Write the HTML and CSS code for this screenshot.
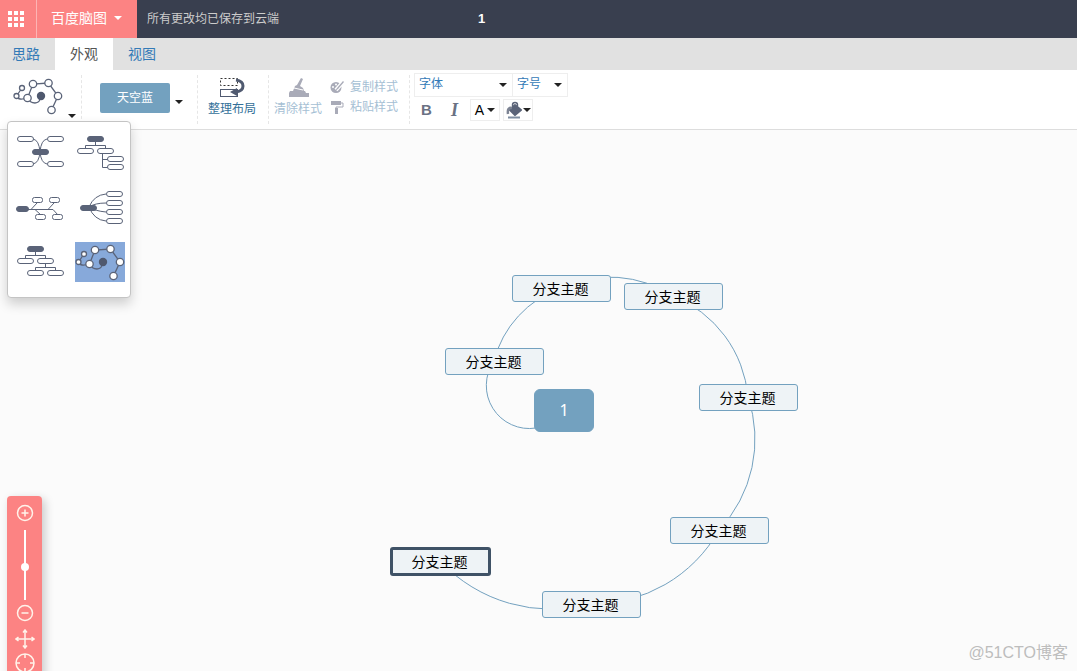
FILE: index.html
```html
<!DOCTYPE html>
<html lang="zh-CN">
<head>
<meta charset="utf-8">
<title>百度脑图</title>
<link rel="stylesheet" href="styles.css">
</head>
<body>
<svg class="defs" aria-hidden="true">
  <symbol id="spiral" viewBox="0 0 50 40">
    <path d="M3.500 20L9 12M3.500 20Q5 25 14.500 22L20 8L35.500 7L45 20L38.500 34M14.500 22Q17 27 22 27Q27 27 28 20" fill="none" stroke="#5a6378" stroke-width="1.300"/>
    <g class="dots" stroke="#5a6378" stroke-width="1.300">
      <circle cx="3.500" cy="20" r="2.500"/><circle cx="9" cy="12" r="2.500"/>
      <circle cx="14.500" cy="22" r="3.700"/><circle cx="20" cy="8" r="3.700"/><circle cx="35.500" cy="7" r="3.700"/><circle cx="45" cy="20" r="3.700"/><circle cx="38.500" cy="34" r="3.700"/>
    </g>
    <circle cx="28" cy="20" r="4.200" fill="#4f586e"/>
  </symbol>
</svg>

<header class="topbar">
  <button class="grid-button" aria-label="应用列表">
    <svg width="16" height="16" viewBox="0 0 16 16" fill="#fff"><path d="M0 0h4v4H0zM6 0h4v4H6zM12 0h4v4h-4zM0 6h4v4H0zM6 6h4v4H6zM12 6h4v4h-4zM0 12h4v4H0zM6 12h4v4H6zM12 12h4v4h-4z"/></svg>
  </button>
  <button class="brand">百度脑图<span class="caret"></span></button>
  <span class="saved">所有更改均已保存到云端</span>
  <h1 class="doc-title">1</h1>
</header>

<nav class="tabs">
  <button class="tab">思路</button>
  <button class="tab tab-active">外观</button>
  <button class="tab">视图</button>
</nav>

<div class="toolbar">
  <div class="group group-template">
    <button class="template-button" aria-label="模板">
      <svg width="50" height="40"><use href="#spiral"/></svg>
      <span class="caret caret-dark"></span>
    </button>
    <div class="template-menu">
      <button class="template-item" aria-label="思维导图"><svg width="50" height="40" viewBox="0 0 50 40" class="line">
        <path d="M18 7Q24 8 25 20Q26 8 32 7M18 32Q24 31 25 20Q26 31 32 32"/>
        <rect x="2.500" y="4.500" width="16" height="5" rx="2.500"/><rect x="32.500" y="4.500" width="16" height="5" rx="2.500"/><rect x="2.500" y="29.500" width="16" height="5" rx="2.500"/><rect x="32.500" y="29.500" width="16" height="5" rx="2.500"/>
        <rect class="solid" x="17.500" y="17.500" width="16" height="5" rx="2.500"/></svg></button>
      <button class="template-item" aria-label="组织结构"><svg width="50" height="40" viewBox="0 0 50 40" class="line">
        <path d="M20.500 9V13.500M10.500 16V13.500H30.500V16M27.500 21V35.500H33M27.500 27.500H33"/>
        <rect class="solid" x="12.500" y="4.500" width="16" height="5" rx="2.500"/><rect x="2.500" y="16.500" width="16" height="5" rx="2.500"/><rect x="22.500" y="16.500" width="16" height="5" rx="2.500"/><rect x="32.500" y="24.500" width="16" height="5" rx="2.500"/><rect x="32.500" y="32.500" width="16" height="5" rx="2.500"/></svg></button>
      <button class="template-item" aria-label="鱼骨图"><svg width="50" height="40" viewBox="0 0 50 40" class="line">
        <path d="M12 22.500H38L43 28M16 22.500L22 16M20 22.500L26 28M33 22.500L39 16"/>
        <rect class="solid" x="1.500" y="19.500" width="12" height="5" rx="2.500"/><rect x="17.500" y="10.500" width="10" height="5" rx="2"/><rect x="34.500" y="10.500" width="10" height="5" rx="2"/><rect x="20.500" y="27.500" width="10" height="5" rx="2"/><rect x="37.500" y="27.500" width="10" height="5" rx="2"/></svg></button>
      <button class="template-item" aria-label="逻辑结构"><svg width="50" height="40" viewBox="0 0 50 40" class="line">
        <path d="M14 20Q19 8 31 7M14 20Q20 16 31 16M14 20Q20 24 31 25M14 20Q19 33 31 34"/>
        <rect x="31.500" y="4.500" width="16" height="5" rx="2.500"/><rect x="31.500" y="13.500" width="16" height="5" rx="2.500"/><rect x="31.500" y="22.500" width="16" height="5" rx="2.500"/><rect x="31.500" y="31.500" width="16" height="5" rx="2.500"/><rect class="solid" x="5.500" y="18.500" width="16" height="5" rx="2.500"/></svg></button>
      <button class="template-item" aria-label="目录组织"><svg width="50" height="40" viewBox="0 0 50 40" class="line">
        <path d="M20.500 9V13.500M10.500 16V13.500H30.500V16M30.500 21V25.500M20.500 28V25.500H40.500V28"/>
        <rect class="solid" x="12.500" y="4.500" width="16" height="5" rx="2.500"/><rect x="2.500" y="16.500" width="16" height="5" rx="2.500"/><rect x="22.500" y="16.500" width="16" height="5" rx="2.500"/><rect x="12.500" y="28.500" width="16" height="5" rx="2.500"/><rect x="32.500" y="28.500" width="16" height="5" rx="2.500"/></svg></button>
      <button class="template-item template-selected" aria-label="天盘图"><svg width="50" height="40"><use href="#spiral"/></svg></button>
    </div>
  </div>

  <div class="group group-theme">
    <button class="theme-button">天空蓝</button>
    <button class="caret-button" aria-label="选择主题"><span class="caret caret-dark"></span></button>
  </div>

  <div class="group group-layout">
    <button class="stack-button">
      <svg width="26" height="21" viewBox="0 0 26 21" fill="none" stroke="#505a70">
        <rect x="1.500" y="1.500" width="17" height="7" stroke-dasharray="2 2" stroke="#333"/>
        <rect x="1.500" y="12.500" width="17" height="7"/>
        <path d="M17 3Q24 4 24 9Q24 14 17 15" stroke-width="3"/><path d="M11 15L18 11V19Z" fill="#505a70" stroke="none"/>
      </svg>
      整理布局
    </button>
  </div>

  <div class="group group-style">
    <button class="stack-button" disabled>
      <svg width="26" height="21" viewBox="0 0 26 21" fill="#a9abb8"><path d="M16 1L18 2L15 9L18 11L19 14H8L10 9L12 8ZM5 14H20L21 16H24V20H4V16Z"/><path d="M9 11L18 13" stroke="#fff"/></svg>
      清除样式
    </button>
    <div class="style-list">
      <button class="row-button" disabled>
        <svg width="14" height="14" viewBox="0 0 14 14"><circle cx="6" cy="7.500" r="5.500" fill="#a9abb8"/><path d="M14 1L6 10" stroke="#fff" stroke-width="4"/><circle cx="6" cy="4.500" r="1" fill="#fff"/><circle cx="3" cy="7" r="1" fill="#fff"/><path d="M13 1L14 2L8 9L5 11L7 8Z" fill="#a9abb8"/></svg>
        复制样式
      </button>
      <button class="row-button" disabled>
        <svg width="14" height="14" viewBox="0 0 14 14"><path d="M1 1H11V5H1Z" fill="#a9abb8"/><path d="M11 3H13V7H6V9" fill="none" stroke="#a9abb8"/><path d="M5 8H8V14H5Z" fill="#a9abb8"/></svg>
        粘贴样式
      </button>
    </div>
  </div>

  <div class="group-font">
    <div class="font-row">
      <label class="select-box select-family"><select aria-label="字体"><option>字体</option></select></label>
      <label class="select-box select-size"><select aria-label="字号"><option>字号</option></select></label>
    </div>
    <div class="font-row font-tools">
      <button class="letter-button bold">B</button>
      <button class="letter-button italic">I</button>
      <button class="color-button">A<span class="caret caret-dark"></span></button>
      <button class="color-button" aria-label="背景色">
        <svg width="16" height="18" viewBox="0 0 16 18"><path d="M4 9L9 4L15 9L9 14Z" fill="#5a6378" stroke="#5a6378" stroke-width="2" stroke-linejoin="round"/><circle cx="9" cy="4" r="2.500" fill="none" stroke="#5a6378" stroke-width="1.500"/><path d="M6 7Q1 6 2 13" fill="none" stroke="#7d8494" stroke-width="2.500"/><path d="M2 16.500H14" stroke="#7d8ca0" stroke-width="2"/></svg>
        <span class="caret caret-dark"></span>
      </button>
    </div>
  </div>
</div>

<main class="canvas">
  <svg class="links" fill="none" stroke="#73a1bf">
    <path d="M536 298A43 43 0 0 1 494 231A105 105 0 0 1 561 158A115 115 0 0 1 673 166A120 120 0 0 1 748 267A132 132 0 0 1 719 400A145 145 0 0 1 591 474A153 153 0 0 1 440 431"/>
  </svg>
  <div class="node root">1</div>
  <div class="node n1">分支主题</div>
  <div class="node n2">分支主题</div>
  <div class="node n3">分支主题</div>
  <div class="node n4">分支主题</div>
  <div class="node n5">分支主题</div>
  <div class="node n6">分支主题</div>
  <div class="node n7 selected">分支主题</div>

  <div class="zoom-bar">
    <button class="zoom-button" aria-label="放大"><svg width="18" height="18" viewBox="0 0 18 18"><circle cx="9" cy="9" r="7.500"/><path d="M5.500 9H12.500M9 5.500V12.500"/></svg></button>
    <input class="zoom-slider" type="range" min="0" max="100" value="47" aria-label="缩放">
    <button class="zoom-button" aria-label="缩小"><svg width="18" height="18" viewBox="0 0 18 18"><circle cx="9" cy="9" r="7.500"/><path d="M5.500 9H12.500"/></svg></button>
    <button class="zoom-button hand" aria-label="移动"><svg width="20" height="20" viewBox="0 0 20 20"><path d="M10 2V18M2 10H18M8 3.500L10 1L12 3.500M8 16.500L10 19L12 16.500M3.500 8L1 10L3.500 12M16.500 8L19 10L16.500 12"/></svg></button>
    <button class="zoom-button" aria-label="定位"><svg width="20" height="20" viewBox="0 0 20 20"><circle cx="10" cy="10" r="9"/><path d="M10 1V5M10 15V19M1 10H5M15 10H19"/></svg></button>
  </div>
  <span class="watermark">@51CTO博客</span>
</main>
</body>
</html>
```
FILE: styles.css
```css
* { box-sizing: border-box; }

html, body { height: 100%; }

body {
  margin: 0;
  display: flex;
  flex-direction: column;
  overflow: hidden;
  background: #fbfbfb;
  color: #333;
  font: 12px/16px "Liberation Sans", "Noto Sans CJK SC", sans-serif;
}

button {
  margin: 0;
  padding: 0;
  border: 0;
  background: none;
  color: inherit;
  font: inherit;
}

svg { display: block; flex: none; }

.defs { position: absolute; width: 0; height: 0; }

.caret {
  border: 4px solid transparent;
  border-top-color: #fff;
  border-bottom: 0;
}

.caret-dark { border-top-color: #222; }

/* Top bar */
.topbar {
  flex: none;
  display: flex;
  align-items: center;
  height: 38px;
  background: #393f4f;
  color: #fff;
}

.grid-button {
  display: flex;
  align-items: center;
  padding-left: 8px;
  width: 37px;
  height: 38px;
  background: #fc8383;
  border-right: 1px solid #fdb4b4;
}

.brand {
  display: flex;
  align-items: center;
  gap: 7px;
  padding: 0 14px 2px;
  width: 100px;
  height: 38px;
  background: #fc8383;
  font-size: 14px;
}

.saved { margin-left: 10px; color: #ccc; }

.doc-title { margin: 0 0 0 199px; font-size: 13px; }

/* Tabs */
.tabs {
  flex: none;
  display: flex;
  height: 32px;
  background: #e1e1e1;
}

.tab {
  padding: 0 15px;
  color: #337ab7;
  font-size: 14px;
}

.tab:first-child { padding-left: 12px; }

.tab-active { background: #fff; color: #555; }

/* Toolbar */
.toolbar {
  flex: none;
  display: flex;
  height: 60px;
  background: #fff;
  border-bottom: 1px solid #ddd;
}

.group {
  display: flex;
  margin: 5px 0;
  border-right: 1px dashed #e6e6e6;
}

.group-template { position: relative; width: 82px; }

.template-button {
  display: flex;
  align-items: flex-end;
  gap: 5px;
  margin-left: 13px;
  padding-top: 1px;
  height: 43px;
}

.template-button svg { align-self: flex-start; }

.dots { fill: #fff; }

.template-menu {
  position: absolute;
  z-index: 2;
  top: 46px;
  left: 7px;
  display: grid;
  grid-template-columns: 50px 50px;
  gap: 15px 10px;
  padding: 10px 5px 15px 7px;
  border: 1px solid #c4c4c4;
  border-radius: 4px;
  background: #fff;
  box-shadow: 0 6px 12px rgba(0, 0, 0, .18);
}

.template-item { width: 50px; height: 40px; }

.template-selected { background: #87a9da; }

.line { fill: #fff; stroke: #5a6378; }

.line path { fill: none; }

.line .solid { fill: #5a6378; }

.group-theme {
  align-items: center;
  width: 116px;
  padding: 0 14px 4px 18px;
}

.theme-button {
  flex: none;
  width: 70px;
  height: 30px;
  border-radius: 2px;
  background: #73a1bf;
  color: #fff;
}

.caret-button { display: flex; flex: none; padding: 8px 5px 0; }

.group-layout { width: 71px; padding-left: 10px; }

.stack-button {
  display: flex;
  flex-direction: column;
  align-items: center;
  gap: 3px;
  padding-top: 2px;
  height: 48px;
  color: #337099;
}

.group-style { width: 141px; padding-left: 5px; gap: 8px; }

.group-style button { color: #a5c0d4; }

.style-list {
  display: flex;
  flex-direction: column;
  gap: 4px;
  padding-top: 4px;
}

.row-button { display: flex; align-items: center; gap: 6px; }

.group-font {
  display: flex;
  flex-direction: column;
  gap: 2px;
  padding: 3px 0 0 4px;
}

.font-row { display: flex; }

.select-box {
  position: relative;
  height: 24px;
  border: 1px solid #eee;
}

.select-box::after {
  content: "";
  position: absolute;
  top: 9px;
  right: 5px;
  border: 4px solid transparent;
  border-top-color: #222;
  border-bottom: 0;
  pointer-events: none;
}

.select-family { width: 99px; }

.select-size { width: 56px; margin-left: -1px; }

.select-box select {
  width: 100%;
  height: 20px;
  padding: 0 4px;
  border: 0;
  background: none;
  color: #337ab7;
  font: inherit;
  appearance: none;
}

.font-tools { align-items: center; gap: 3px; }

.letter-button {
  width: 25px;
  color: #6a7284;
  font-size: 15px;
  font-weight: bold;
}

.italic { font-family: "Liberation Serif", serif; font-size: 18px; font-style: italic; }

.color-button {
  display: flex;
  align-items: center;
  justify-content: center;
  gap: 3px;
  width: 30px;
  height: 22px;
  border: 1px solid #eee;
  color: #000;
  font-size: 14px;
}

.color-button svg + .caret { margin-left: -2px; }

/* Mind map */
.canvas { position: relative; flex: 1; min-height: 0; }

.links { position: absolute; width: 100%; height: 100%; }

.node {
  position: absolute;
  width: 99px;
  height: 27px;
  padding-right: 2px;
  border: 1px solid #73a1bf;
  border-radius: 3px;
  background: #eef3f6;
  color: #000;
  font-size: 14px;
  line-height: 26px;
  text-align: center;
}

.root {
  left: 534px;
  top: 259px;
  width: 60px;
  height: 43px;
  padding: 0;
  border-radius: 6px;
  background: #73a1bf;
  color: #fff;
  font: 16px/40px "Noto Sans", sans-serif;
}

.n1 { left: 445px; top: 218px; }
.n2 { left: 512px; top: 145px; }
.n3 { left: 624px; top: 153px; }
.n4 { left: 699px; top: 254px; }
.n5 { left: 670px; top: 387px; }
.n6 { left: 542px; top: 461px; }
.n7 { left: 390px; top: 417px; }

.selected {
  width: 101px;
  height: 29px;
  border: 3px solid #3f5266;
  line-height: 24px;
}

/* Zoom bar */
.zoom-bar {
  position: absolute;
  top: 366px;
  left: 7px;
  display: flex;
  flex-direction: column;
  align-items: center;
  width: 35px;
  padding: 8px 0;
  border-radius: 4px;
  background: #fc8383;
  box-shadow: 3px 3px 10px rgba(0, 0, 0, .2);
}

.zoom-button svg { fill: none; stroke: #fff3ea; stroke-width: 1.5; }

.hand { margin: 7px 0 4px; }

.zoom-slider {
  appearance: none;
  writing-mode: vertical-lr;
  direction: rtl;
  width: 8px;
  height: 70px;
  margin: 8px 0 4px;
  background: linear-gradient(#fff, #fff) center / 2px 100% no-repeat;
}

.zoom-slider::-webkit-slider-thumb {
  appearance: none;
  width: 8px;
  height: 8px;
  border-radius: 4px;
  background: #fff;
}

.watermark {
  position: absolute;
  right: 9px;
  bottom: 8px;
  color: #bdbdbd;
  font-size: 16px;
  line-height: 20px;
}
```
